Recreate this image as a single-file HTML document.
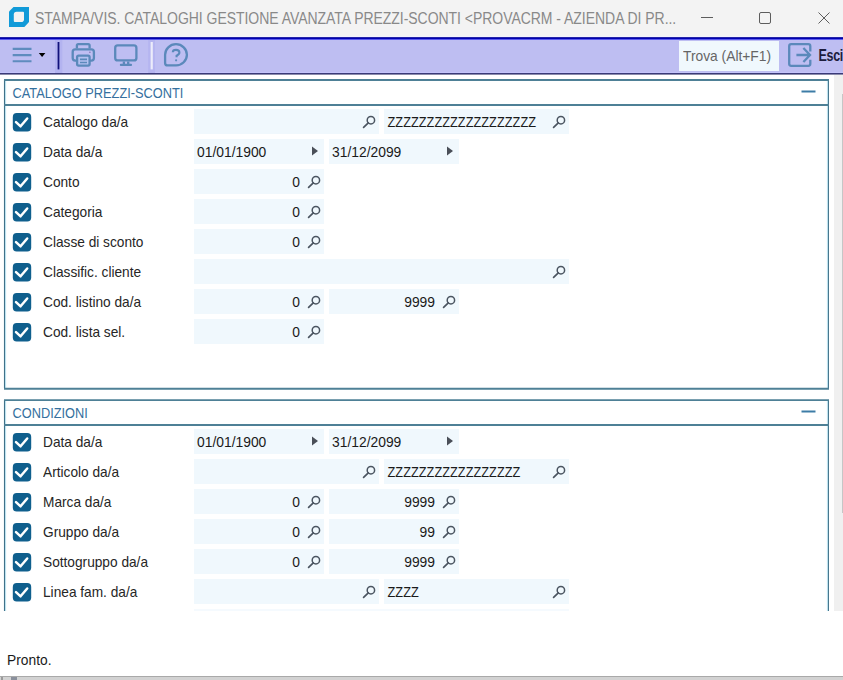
<!DOCTYPE html>
<html><head><meta charset="utf-8">
<style>
*{box-sizing:border-box;margin:0;padding:0}
html,body{width:843px;height:680px;overflow:hidden;background:#fff;font-family:"Liberation Sans",sans-serif}
body{position:relative}
div{position:absolute}
#title{left:0;top:0;width:843px;height:37px;background:#f3f3f3}
#titletext{left:35px;top:8.6px;font-size:14px;letter-spacing:-0.04px;color:#898989;white-space:pre;line-height:17px;transform:scaleY(1.13);transform-origin:0 0}
#blueline{left:0;top:36px;width:843px;height:4px;background:linear-gradient(#f2f2fe 0 1px,#2424a6 1px 2px,#0000b2 2px 3px,#5a5aee 3px 4px)}
#toolbar{left:0;top:40px;width:843px;height:33px;background:#bebef2}
#tbline{left:0;top:72px;width:843px;height:3px;background:linear-gradient(#c4c4fa 0 1px,#3a3a78 1px 2px,#8c8cac 2px 3px)}
#trova{left:679px;top:40.5px;width:100px;height:30px;background:#f0f8fd}
#trovatxt{left:683px;top:47.5px;font-size:13.8px;color:#656565;white-space:pre;line-height:16px;transform:scaleY(1.1);transform-origin:0 0}
#esci{left:818.5px;top:47.3px;font-size:12.5px;font-weight:bold;letter-spacing:-0.3px;color:#1c1c3c;white-space:pre;line-height:15px;transform:scaleY(1.3);transform-origin:0 0}
#scroll{left:834px;top:75px;width:9px;height:536px;background:#f0f0f0}
#thumb{left:841.7px;top:94px;width:1.3px;height:419px;background:#c6c6c6}
#status{left:7px;top:651.5px;font-size:13.8px;color:#1a1a1a;white-space:pre;line-height:16px;transform:scaleY(1.08);transform-origin:0 0}
#bottombar{left:0;top:676px;width:843px;height:4px;background:#d2d2d2;border-top:1px solid #a9a9a9}
.gtitle{left:12.5px;font-size:12.8px;color:#35709e;transform:scaleY(1.08);transform-origin:0 0;line-height:15px;white-space:pre}
.lbl{left:43px;font-size:13.7px;color:#262626;white-space:pre;line-height:16px;transform:scaleY(1.12);transform-origin:0 0}
.fld{height:25px;background:#f0f8fd}
.ftxt{font-size:13.85px;color:#1a1a1a;white-space:pre;line-height:16px;transform:scaleY(1.08);transform-origin:0 0}
.ftxt.z{font-size:12.8px;letter-spacing:0;transform:scaleY(1.15)}
svg{position:absolute;left:0;top:0}
</style></head><body>
<div id="title"></div>
<div id="titletext">STAMPA/VIS. CATALOGHI GESTIONE AVANZATA PREZZI-SCONTI &lt;PROVACRM - AZIENDA DI PR...</div>
<div id="blueline"></div>
<div id="toolbar"></div>
<div id="tbline"></div>
<div id="trova"></div>
<div id="trovatxt">Trova (Alt+F1)</div>
<div id="esci">Esci</div>
<div id="scroll"></div>
<div id="thumb"></div>
<div class="gtitle" style="top:85px">CATALOGO PREZZI-SCONTI</div>
<div class="gtitle" style="top:405px">CONDIZIONI</div>
<div class="lbl" style="top:114px">Catalogo da/a</div><div class="fld" style="left:194px;top:109px;width:185px"></div><div class="fld" style="left:384px;top:109px;width:185px"></div><div class="ftxt z" style="left:387.5px;top:112.6px">ZZZZZZZZZZZZZZZZZZZ</div><div class="lbl" style="top:144px">Data da/a</div><div class="fld" style="left:194px;top:139px;width:130px"></div><div class="ftxt" style="left:197px;top:142.8px">01/01/1900</div><div class="fld" style="left:329px;top:139px;width:130px"></div><div class="ftxt" style="left:332px;top:142.8px">31/12/2099</div><div class="lbl" style="top:174px">Conto</div><div class="fld" style="left:194px;top:169px;width:130px"></div><div class="ftxt r" style="right:543px;top:172.8px">0</div><div class="lbl" style="top:204px">Categoria</div><div class="fld" style="left:194px;top:199px;width:130px"></div><div class="ftxt r" style="right:543px;top:202.8px">0</div><div class="lbl" style="top:234px">Classe di sconto</div><div class="fld" style="left:194px;top:229px;width:130px"></div><div class="ftxt r" style="right:543px;top:232.8px">0</div><div class="lbl" style="top:264px">Classific. cliente</div><div class="fld" style="left:194px;top:259px;width:375px"></div><div class="lbl" style="top:294px">Cod. listino da/a</div><div class="fld" style="left:194px;top:289px;width:130px"></div><div class="ftxt r" style="right:543px;top:292.8px">0</div><div class="fld" style="left:329px;top:289px;width:130px"></div><div class="ftxt r" style="right:408px;top:292.8px">9999</div><div class="lbl" style="top:324px">Cod. lista sel.</div><div class="fld" style="left:194px;top:319px;width:130px"></div><div class="ftxt r" style="right:543px;top:322.8px">0</div><div class="lbl" style="top:434px">Data da/a</div><div class="fld" style="left:194px;top:429px;width:130px"></div><div class="ftxt" style="left:197px;top:432.8px">01/01/1900</div><div class="fld" style="left:329px;top:429px;width:130px"></div><div class="ftxt" style="left:332px;top:432.8px">31/12/2099</div><div class="lbl" style="top:464px">Articolo da/a</div><div class="fld" style="left:194px;top:459px;width:185px"></div><div class="fld" style="left:384px;top:459px;width:185px"></div><div class="ftxt z" style="left:387.5px;top:462.6px">ZZZZZZZZZZZZZZZZZ</div><div class="lbl" style="top:494px">Marca da/a</div><div class="fld" style="left:194px;top:489px;width:130px"></div><div class="ftxt r" style="right:543px;top:492.8px">0</div><div class="fld" style="left:329px;top:489px;width:130px"></div><div class="ftxt r" style="right:408px;top:492.8px">9999</div><div class="lbl" style="top:524px">Gruppo da/a</div><div class="fld" style="left:194px;top:519px;width:130px"></div><div class="ftxt r" style="right:543px;top:522.8px">0</div><div class="fld" style="left:329px;top:519px;width:130px"></div><div class="ftxt r" style="right:408px;top:522.8px">99</div><div class="lbl" style="top:554px">Sottogruppo da/a</div><div class="fld" style="left:194px;top:549px;width:130px"></div><div class="ftxt r" style="right:543px;top:552.8px">0</div><div class="fld" style="left:329px;top:549px;width:130px"></div><div class="ftxt r" style="right:408px;top:552.8px">9999</div><div class="lbl" style="top:584px">Linea fam. da/a</div><div class="fld" style="left:194px;top:579px;width:185px"></div><div class="fld" style="left:384px;top:579px;width:185px"></div><div class="ftxt z" style="left:387.5px;top:582.6px">ZZZZ</div>
<div style="left:194px;top:609px;width:375px;height:2px;background:#f5fafe"></div>
<svg width="843" height="680" viewBox="0 0 843 680">

<path d="M13.5 7 H29 V22 L24.4 27 H9 V11.6 Z" fill="#119ad8"/>
<path d="M16.6 11.8 H23 Q24 11.8 24 12.8 V19.2 Q24 22 21.2 22 H14.8 Q13.8 22 13.8 21 V14.6 Q13.8 11.8 16.6 11.8 Z" fill="#f3f3f3"/>
<path d="M12.7 48.9 H31.5 M12.7 55.1 H31.5 M12.7 61.3 H31.5" stroke="#5f8cbe" stroke-width="2.1"/>
<path d="M38.8 53 H45.4 L42.1 57 Z" fill="#000"/>
<rect x="55" y="40" width="7.4" height="33" fill="#b3b3f0"/>
<rect x="57.6" y="42" width="1.8" height="27.4" fill="#12127a"/>
<rect x="148.2" y="40" width="6.8" height="33" fill="#b5b5f0"/>
<rect x="150.6" y="42" width="2.2" height="27.4" fill="#ececfa"/>
<g fill="none" stroke="#5b89bb" stroke-width="2.3">
<path d="M76.9 48.5 V45.5 Q76.9 44.1 78.3 44.1 H88.2 Q89.6 44.1 89.6 45.5 V48.5"/>
<path d="M77 60.6 H75.2 Q72.7 60.6 72.7 58.1 V51.9 Q72.7 49.4 75.2 49.4 H91.4 Q93.9 49.4 93.9 51.9 V58.1 Q93.9 60.6 91.4 60.6 H89.5"/>
<rect x="77.1" y="55.6" width="12.5" height="10" rx="1.5" fill="#b3c1f0"/>
<path d="M80 59.3 H87 M80 62.5 H87" stroke-width="1.7"/>
<rect x="115.2" y="45.4" width="21.2" height="15" rx="2.5"/>
<path d="M123.9 61.5 V64 M128.2 61.5 V64"/>
<path d="M120.9 64.9 H131" stroke-linecap="round" stroke-width="2.2"/>
<path d="M165.1 54.8 A10.9 10.6 0 1 1 176 65.4 H167.6 Q165.1 65.4 165.1 62.9 Z"/>
<path d="M172.8 52.3 Q172.8 49.9 176 49.9 Q179.4 49.9 179.4 52.6 Q179.4 54.4 176.6 55.6 V57.2" stroke-width="2.1"/>
<path d="M810.3 51.5 V46.2 Q810.3 44.2 808.3 44.2 H791.2 Q789.2 44.2 789.2 46.2 V63.8 Q789.2 65.8 791.2 65.8 H808.3 Q810.3 65.8 810.3 63.8 V59.7"/>
<path d="M796.4 55 H809.8 M803.4 48 L810 55 L803.4 62"/>
</g>
<circle cx="176.1" cy="60.3" r="1.1" fill="#5f8cbe"/>
<circle cx="89.9" cy="52.3" r="0.7" fill="#7a6aa8"/>

<path d="M701 17.5 H713" stroke="#5d5d5d" stroke-width="1"/>
<rect x="759.5" y="12.5" width="11" height="11" rx="1.5" fill="none" stroke="#5d5d5d" stroke-width="1"/>
<path d="M818.5 12.5 L829.5 23.5 M829.5 12.5 L818.5 23.5" stroke="#5d5d5d" stroke-width="1"/>

<g fill="none" stroke="#3f7189" stroke-width="1.1">
<path d="M4.5 388.5 V80 M828.4 80 V388.5"/>
<path d="M4.5 611 V400 M828.4 400 V611"/>
</g>
<g fill="none" stroke="#b8e0ee" stroke-width="1">
<path d="M5.6 81 V388 M827.4 81 V388"/>
<path d="M5.6 401 V611 M827.4 401 V611"/>
</g>
<g stroke="#4e8096" stroke-width="1.9">
<path d="M4 80.05 H829"/>
<path d="M4 105.05 H829"/>
<path d="M4 388.75 H829"/>
<path d="M4 400.1 H829"/>
<path d="M4 425.05 H829"/>
</g>
<path d="M801.5 91.5 H815.5" stroke="#3d7ca6" stroke-width="2"/>
<path d="M801.5 411.5 H815.5" stroke="#3d7ca6" stroke-width="2"/>

<g><rect x="12.8" y="113.1" width="18.4" height="18.4" rx="3.9" fill="#0f5f8d"/><path d="M16.0 122.1 L20.6 126.3 L27.200000000000003 118.5" fill="none" stroke="#fff" stroke-width="2.5" stroke-linecap="round" stroke-linejoin="round"/><circle cx="370.9" cy="120.2" r="3.7" fill="none" stroke="#4b5561" stroke-width="1.5"/><path d="M368.3 122.8 L363.6 127.3" stroke="#4b5561" stroke-width="1.7" stroke-linecap="round"/><circle cx="560.9" cy="120.2" r="3.7" fill="none" stroke="#4b5561" stroke-width="1.5"/><path d="M558.3 122.8 L553.6 127.3" stroke="#4b5561" stroke-width="1.7" stroke-linecap="round"/><rect x="12.8" y="143.1" width="18.4" height="18.4" rx="3.9" fill="#0f5f8d"/><path d="M16.0 152.1 L20.6 156.3 L27.200000000000003 148.5" fill="none" stroke="#fff" stroke-width="2.5" stroke-linecap="round" stroke-linejoin="round"/><path d="M312 146.5 L318 151 L312 155.5 Z" fill="#4a4f58"/><path d="M447 146.5 L453 151 L447 155.5 Z" fill="#4a4f58"/><rect x="12.8" y="173.1" width="18.4" height="18.4" rx="3.9" fill="#0f5f8d"/><path d="M16.0 182.1 L20.6 186.3 L27.200000000000003 178.5" fill="none" stroke="#fff" stroke-width="2.5" stroke-linecap="round" stroke-linejoin="round"/><circle cx="315.9" cy="180.2" r="3.7" fill="none" stroke="#4b5561" stroke-width="1.5"/><path d="M313.3 182.8 L308.6 187.3" stroke="#4b5561" stroke-width="1.7" stroke-linecap="round"/><rect x="12.8" y="203.1" width="18.4" height="18.4" rx="3.9" fill="#0f5f8d"/><path d="M16.0 212.1 L20.6 216.3 L27.200000000000003 208.5" fill="none" stroke="#fff" stroke-width="2.5" stroke-linecap="round" stroke-linejoin="round"/><circle cx="315.9" cy="210.2" r="3.7" fill="none" stroke="#4b5561" stroke-width="1.5"/><path d="M313.3 212.8 L308.6 217.3" stroke="#4b5561" stroke-width="1.7" stroke-linecap="round"/><rect x="12.8" y="233.1" width="18.4" height="18.4" rx="3.9" fill="#0f5f8d"/><path d="M16.0 242.1 L20.6 246.3 L27.200000000000003 238.5" fill="none" stroke="#fff" stroke-width="2.5" stroke-linecap="round" stroke-linejoin="round"/><circle cx="315.9" cy="240.2" r="3.7" fill="none" stroke="#4b5561" stroke-width="1.5"/><path d="M313.3 242.8 L308.6 247.3" stroke="#4b5561" stroke-width="1.7" stroke-linecap="round"/><rect x="12.8" y="263.1" width="18.4" height="18.4" rx="3.9" fill="#0f5f8d"/><path d="M16.0 272.1 L20.6 276.3 L27.200000000000003 268.5" fill="none" stroke="#fff" stroke-width="2.5" stroke-linecap="round" stroke-linejoin="round"/><circle cx="560.9" cy="270.2" r="3.7" fill="none" stroke="#4b5561" stroke-width="1.5"/><path d="M558.3 272.8 L553.6 277.3" stroke="#4b5561" stroke-width="1.7" stroke-linecap="round"/><rect x="12.8" y="293.1" width="18.4" height="18.4" rx="3.9" fill="#0f5f8d"/><path d="M16.0 302.1 L20.6 306.3 L27.200000000000003 298.5" fill="none" stroke="#fff" stroke-width="2.5" stroke-linecap="round" stroke-linejoin="round"/><circle cx="315.9" cy="300.2" r="3.7" fill="none" stroke="#4b5561" stroke-width="1.5"/><path d="M313.3 302.8 L308.6 307.3" stroke="#4b5561" stroke-width="1.7" stroke-linecap="round"/><circle cx="450.9" cy="300.2" r="3.7" fill="none" stroke="#4b5561" stroke-width="1.5"/><path d="M448.3 302.8 L443.6 307.3" stroke="#4b5561" stroke-width="1.7" stroke-linecap="round"/><rect x="12.8" y="323.1" width="18.4" height="18.4" rx="3.9" fill="#0f5f8d"/><path d="M16.0 332.1 L20.6 336.3 L27.200000000000003 328.5" fill="none" stroke="#fff" stroke-width="2.5" stroke-linecap="round" stroke-linejoin="round"/><circle cx="315.9" cy="330.2" r="3.7" fill="none" stroke="#4b5561" stroke-width="1.5"/><path d="M313.3 332.8 L308.6 337.3" stroke="#4b5561" stroke-width="1.7" stroke-linecap="round"/><rect x="12.8" y="433.1" width="18.4" height="18.4" rx="3.9" fill="#0f5f8d"/><path d="M16.0 442.1 L20.6 446.3 L27.200000000000003 438.5" fill="none" stroke="#fff" stroke-width="2.5" stroke-linecap="round" stroke-linejoin="round"/><path d="M312 436.5 L318 441 L312 445.5 Z" fill="#4a4f58"/><path d="M447 436.5 L453 441 L447 445.5 Z" fill="#4a4f58"/><rect x="12.8" y="463.1" width="18.4" height="18.4" rx="3.9" fill="#0f5f8d"/><path d="M16.0 472.1 L20.6 476.3 L27.200000000000003 468.5" fill="none" stroke="#fff" stroke-width="2.5" stroke-linecap="round" stroke-linejoin="round"/><circle cx="370.9" cy="470.2" r="3.7" fill="none" stroke="#4b5561" stroke-width="1.5"/><path d="M368.3 472.8 L363.6 477.3" stroke="#4b5561" stroke-width="1.7" stroke-linecap="round"/><circle cx="560.9" cy="470.2" r="3.7" fill="none" stroke="#4b5561" stroke-width="1.5"/><path d="M558.3 472.8 L553.6 477.3" stroke="#4b5561" stroke-width="1.7" stroke-linecap="round"/><rect x="12.8" y="493.1" width="18.4" height="18.4" rx="3.9" fill="#0f5f8d"/><path d="M16.0 502.1 L20.6 506.3 L27.200000000000003 498.5" fill="none" stroke="#fff" stroke-width="2.5" stroke-linecap="round" stroke-linejoin="round"/><circle cx="315.9" cy="500.2" r="3.7" fill="none" stroke="#4b5561" stroke-width="1.5"/><path d="M313.3 502.8 L308.6 507.3" stroke="#4b5561" stroke-width="1.7" stroke-linecap="round"/><circle cx="450.9" cy="500.2" r="3.7" fill="none" stroke="#4b5561" stroke-width="1.5"/><path d="M448.3 502.8 L443.6 507.3" stroke="#4b5561" stroke-width="1.7" stroke-linecap="round"/><rect x="12.8" y="523.1" width="18.4" height="18.4" rx="3.9" fill="#0f5f8d"/><path d="M16.0 532.1 L20.6 536.3 L27.200000000000003 528.5" fill="none" stroke="#fff" stroke-width="2.5" stroke-linecap="round" stroke-linejoin="round"/><circle cx="315.9" cy="530.2" r="3.7" fill="none" stroke="#4b5561" stroke-width="1.5"/><path d="M313.3 532.8 L308.6 537.3" stroke="#4b5561" stroke-width="1.7" stroke-linecap="round"/><circle cx="450.9" cy="530.2" r="3.7" fill="none" stroke="#4b5561" stroke-width="1.5"/><path d="M448.3 532.8 L443.6 537.3" stroke="#4b5561" stroke-width="1.7" stroke-linecap="round"/><rect x="12.8" y="553.1" width="18.4" height="18.4" rx="3.9" fill="#0f5f8d"/><path d="M16.0 562.1 L20.6 566.3 L27.200000000000003 558.5" fill="none" stroke="#fff" stroke-width="2.5" stroke-linecap="round" stroke-linejoin="round"/><circle cx="315.9" cy="560.2" r="3.7" fill="none" stroke="#4b5561" stroke-width="1.5"/><path d="M313.3 562.8 L308.6 567.3" stroke="#4b5561" stroke-width="1.7" stroke-linecap="round"/><circle cx="450.9" cy="560.2" r="3.7" fill="none" stroke="#4b5561" stroke-width="1.5"/><path d="M448.3 562.8 L443.6 567.3" stroke="#4b5561" stroke-width="1.7" stroke-linecap="round"/><rect x="12.8" y="583.1" width="18.4" height="18.4" rx="3.9" fill="#0f5f8d"/><path d="M16.0 592.1 L20.6 596.3 L27.200000000000003 588.5" fill="none" stroke="#fff" stroke-width="2.5" stroke-linecap="round" stroke-linejoin="round"/><circle cx="370.9" cy="590.2" r="3.7" fill="none" stroke="#4b5561" stroke-width="1.5"/><path d="M368.3 592.8 L363.6 597.3" stroke="#4b5561" stroke-width="1.7" stroke-linecap="round"/><circle cx="560.9" cy="590.2" r="3.7" fill="none" stroke="#4b5561" stroke-width="1.5"/><path d="M558.3 592.8 L553.6 597.3" stroke="#4b5561" stroke-width="1.7" stroke-linecap="round"/></g>
<rect x="0" y="611" width="834" height="65" fill="#fff"/>
</svg>
<div id="status">Pronto.</div>
<div id="bottombar"></div>
<div style="left:11px;top:677px;width:6px;height:3px;background:#8a909c"></div>
<div style="left:1px;top:677px;width:2px;height:3px;background:#9a9a9a"></div>
</body></html>
